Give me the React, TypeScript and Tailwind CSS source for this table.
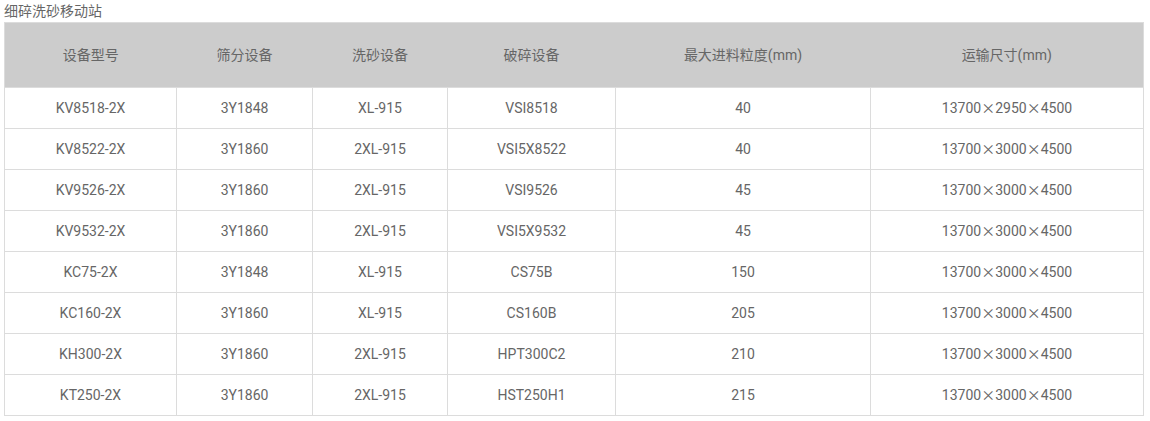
import React from 'react';

const headers = ['设备型号', '筛分设备', '洗砂设备', '破碎设备', '最大进料粒度(mm)', '运输尺寸(mm)'];

const rows: string[][] = [
  ['KV8518-2X', '3Y1848', 'XL-915', 'VSI8518', '40', '13700×2950×4500'],
  ['KV8522-2X', '3Y1860', '2XL-915', 'VSI5X8522', '40', '13700×3000×4500'],
  ['KV9526-2X', '3Y1860', '2XL-915', 'VSI9526', '45', '13700×3000×4500'],
  ['KV9532-2X', '3Y1860', '2XL-915', 'VSI5X9532', '45', '13700×3000×4500'],
  ['KC75-2X', '3Y1848', 'XL-915', 'CS75B', '150', '13700×3000×4500'],
  ['KC160-2X', '3Y1860', 'XL-915', 'CS160B', '205', '13700×3000×4500'],
  ['KH300-2X', '3Y1860', '2XL-915', 'HPT300C2', '210', '13700×3000×4500'],
  ['KT250-2X', '3Y1860', '2XL-915', 'HST250H1', '215', '13700×3000×4500'],
];

const colWidths = ['w-[172px]', 'w-[136px]', 'w-[135px]', 'w-[168px]', 'w-[255px]', 'w-[273px]'];

// split "13700×3000×4500" so the × gets the wider CJK glyph
const renderCell = (c: string) => {
  if (!c.includes('×')) return c;
  const parts = c.split('×');
  return parts.map((p, i) => (
    <React.Fragment key={i}>
      {p}
      {i < parts.length - 1 && <span className="font-['Noto_Sans_CJK_SC',sans-serif]">×</span>}
    </React.Fragment>
  ));
};

export default function App() {
  return (
    <div className="bg-white px-[4px] text-[14px] text-[#666] font-['Roboto','Noto_Sans_CJK_SC',sans-serif]">
      <div className="h-[22px] leading-[22px]">细碎洗砂移动站</div>
      <table className="w-[1140px] table-fixed border-collapse border border-[#dcdcdc]">
        <colgroup>
          {colWidths.map((w, i) => (
            <col key={i} className={w} />
          ))}
        </colgroup>
        <thead>
          <tr className="bg-[#cccccc]">
            {headers.map((h) => (
              <th key={h} className="h-[65px] font-normal text-center text-[#666] p-0">
                {h}
              </th>
            ))}
          </tr>
        </thead>
        <tbody>
          {rows.map((r) => (
            <tr key={r[0]}>
              {r.map((c, i) => (
                <td key={i} className="h-[41px] p-0 text-center border border-[#dcdcdc]">
                  {renderCell(c)}
                </td>
              ))}
            </tr>
          ))}
        </tbody>
      </table>
    </div>
  );
}
